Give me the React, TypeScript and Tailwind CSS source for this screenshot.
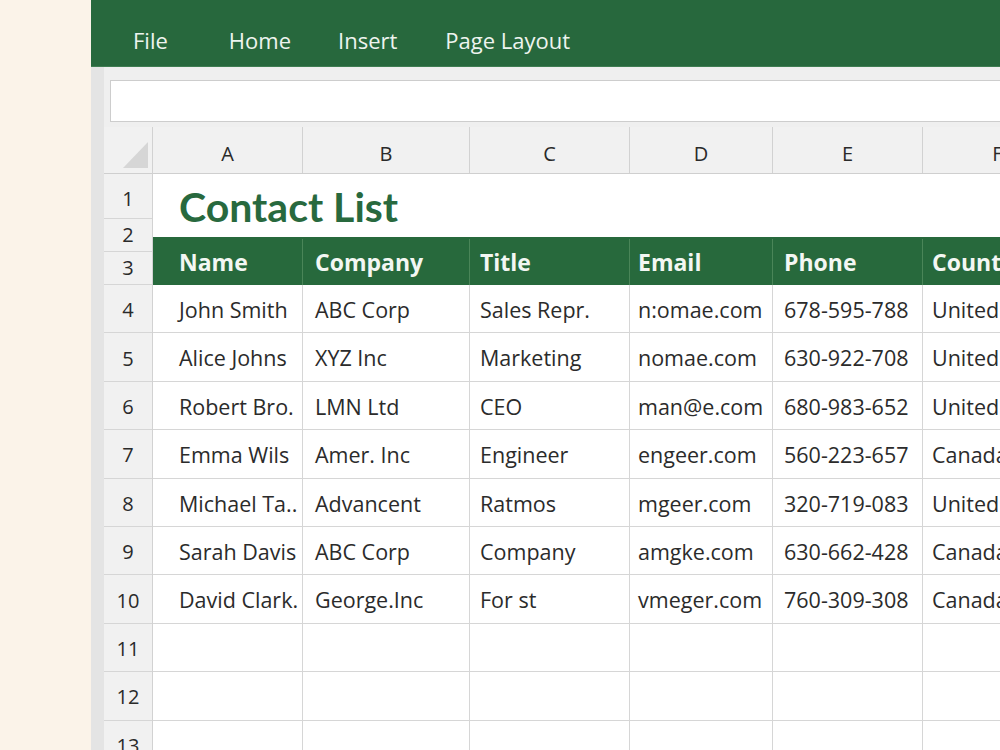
import React from "react";

const cols = [
  { letter: "A", w: "w-[150px]", pl: "pl-[26px]" },
  { letter: "B", w: "w-[167px]", pl: "pl-[12px]" },
  { letter: "C", w: "w-[160px]", pl: "pl-[10px]" },
  { letter: "D", w: "w-[143px]", pl: "pl-[8px]" },
  { letter: "E", w: "w-[150px]", pl: "pl-[11px]" },
  { letter: "F", w: "w-[150px]", pl: "pl-[9px]" },
];

const headers = ["Name", "Company", "Title", "Email", "Phone", "Country"];

const rows: string[][] = [
  ["John Smith", "ABC Corp", "Sales Repr.", "n:omae.com", "678-595-788", "United States"],
  ["Alice Johns", "XYZ Inc", "Marketing", "nomae.com", "630-922-708", "United States"],
  ["Robert Bro.", "LMN Ltd", "CEO", "man@e.com", "680-983-652", "United States"],
  ["Emma Wils", "Amer. Inc", "Engineer", "engeer.com", "560-223-657", "Canada"],
  ["Michael Ta..", "Advancent", "Ratmos", "mgeer.com", "320-719-083", "United States"],
  ["Sarah Davis", "ABC Corp", "Company", "amgke.com", "630-662-428", "Canada"],
  ["David Clark.", "George.Inc", "For st", "vmeger.com", "760-309-308", "Canada"],
  ["", "", "", "", "", ""],
  ["", "", "", "", "", ""],
  ["", "", "", "", "", ""],
];

const font = { fontFamily: "'Open Sans', 'Noto Sans', sans-serif" };

export default function App() {
  return (
    <div
      className="flex h-[750px] w-[1000px] overflow-hidden bg-[#fbf3e9]"
      style={font}
    >
      <div className="w-[91px] shrink-0" />
      <div className="flex min-w-0 flex-1 flex-col bg-[#efefef]">
        {/* Ribbon tabs */}
        <div className="flex h-[67px] shrink-0 items-center border-b border-[#3f7d52] bg-[#27683d] pl-[42px] pt-[14px] text-[22px] text-[#eef4ef]">
          <span className="mr-[61px]">File</span>
          <span className="mr-[47px]">Home</span>
          <span className="mr-[48px]">Insert</span>
          <span>Page Layout</span>
        </div>
        <div className="flex min-h-0 flex-1">
          <div className="w-[13px] shrink-0 bg-[#e4e4e4]" />
          <div className="flex min-w-0 flex-1 flex-col">
            {/* Formula bar */}
            <div className="shrink-0 pl-[6px] pt-[13px]">
              <div className="h-[42px] w-[900px] border border-[#cdcdcd] bg-white" />
            </div>
            <div className="mt-[5px] flex flex-1">
              {/* Row headers */}
              <div className="flex w-[49px] shrink-0 flex-col border-r border-[#d2d2d2] bg-[#f1f1f1] text-[20px] text-[#2a2a2a]">
                <div className="relative h-[47px] shrink-0 border-b border-[#cfcfcf]">
                  <svg
                    className="absolute left-[19px] top-[15px]"
                    width="25"
                    height="26"
                    viewBox="0 0 25 26"
                  >
                    <polygon points="25,0 25,26 0,26" fill="#d6d6d6" />
                  </svg>
                </div>
                <div className="flex h-[45px] shrink-0 items-center justify-center border-b border-[#d6d6d6] pt-[5px]">1</div>
                <div className="flex h-[33px] shrink-0 items-center justify-center border-b border-[#d6d6d6]">2</div>
                <div className="flex h-[33px] shrink-0 items-center justify-center border-b border-[#d6d6d6]">3</div>
                {rows.map((_, i) => (
                  <div
                    key={i}
                    className="flex h-[48.4px] shrink-0 items-center justify-center border-b border-[#d6d6d6] pt-[3px]"
                  >
                    {i + 4}
                  </div>
                ))}
              </div>
              {/* Cells */}
              <div className="flex min-w-0 flex-1 flex-col bg-white">
                <div className="flex h-[47px] shrink-0 border-b border-[#cfcfcf] bg-[#f1f1f1] text-[20px] text-[#2a2a2a]">
                  {cols.map((c) => (
                    <div
                      key={c.letter}
                      className={`${c.w} flex shrink-0 items-center justify-center border-r border-[#d2d2d2] pt-[7px]`}
                    >
                      {c.letter}
                    </div>
                  ))}
                </div>
                <div className="flex h-[63px] shrink-0 items-center pl-[26px] pt-[2px]">
                  <span
                    className="text-[41px] font-bold leading-none text-[#28693e]"
                    style={{ fontFamily: "Lato, 'Open Sans', sans-serif" }}
                  >
                    Contact List
                  </span>
                </div>
                <div className="flex h-[48px] shrink-0 bg-[#27693c] pt-[2px] text-[23px] font-bold text-[#f3f7f3]">
                  {cols.map((c, i) => (
                    <div
                      key={c.letter}
                      className={`${c.w} ${c.pl} flex shrink-0 items-center whitespace-nowrap border-r border-[#4a8558]`}
                    >
                      {headers[i]}
                    </div>
                  ))}
                </div>
                {rows.map((r, ri) => (
                  <div key={ri} className="flex h-[48.4px] shrink-0 text-[21.5px] text-[#2b2b2b]">
                    {cols.map((c, ci) => (
                      <div
                        key={c.letter}
                        className={`${c.w} ${c.pl} flex shrink-0 items-center overflow-hidden whitespace-nowrap border-b border-r border-[#d6d6d6] pt-[3px]`}
                      >
                        {r[ci]}
                      </div>
                    ))}
                  </div>
                ))}
              </div>
            </div>
          </div>
        </div>
      </div>
    </div>
  );
}
